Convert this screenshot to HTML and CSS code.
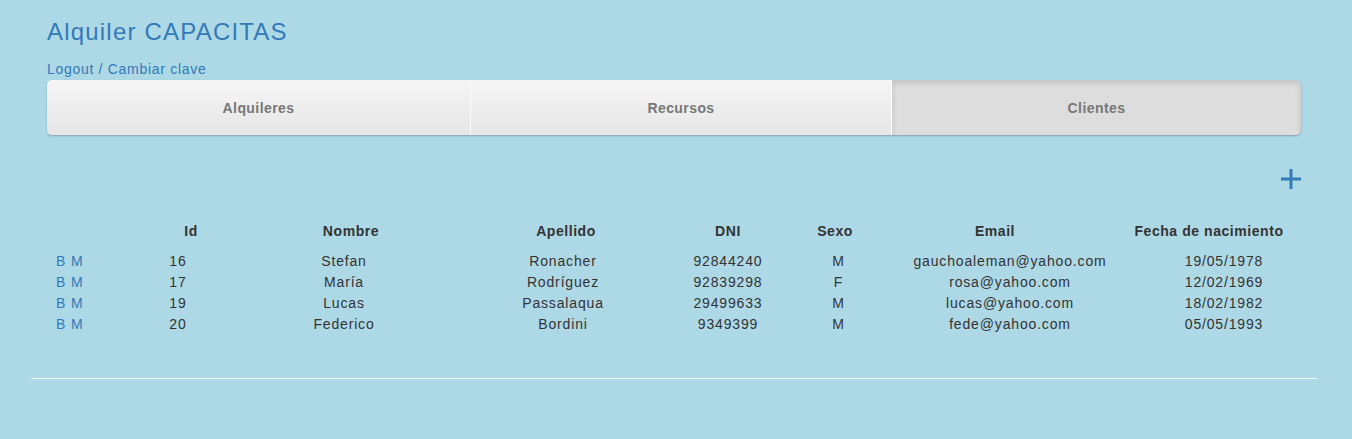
FILE: index.html
```html
<!DOCTYPE html>
<html lang="es">
<head>
<meta charset="utf-8">
<title>Alquiler CAPACITAS</title>
<link rel="stylesheet" href="styles.css">
</head>
<body>
<div class="page">
  <div class="content">
    <h1 class="title">Alquiler CAPACITAS</h1>
    <div class="userlinks"><a href="#">Logout</a> / <a href="#">Cambiar clave</a></div>
    <nav class="tabs">
      <a class="tab t1" href="#">Alquileres</a>
      <a class="tab t2" href="#">Recursos</a>
      <a class="tab t3 active" href="#">Clientes</a>
    </nav>
    <div class="toolbar">
      <a class="add" href="#" aria-label="Agregar">
        <svg width="20" height="20" viewBox="0 0 20 20"><rect x="8.5" y="0" width="3" height="20" fill="#337ab7"/><rect x="0" y="8.5" width="20" height="3" fill="#337ab7"/></svg>
      </a>
    </div>
    <div class="grid">
      <div class="row head">
        <div></div><div>Id</div><div>Nombre</div><div>Apellido</div><div>DNI</div><div>Sexo</div><div>Email</div><div>Fecha de nacimiento</div>
      </div>
      <div class="row body">
        <div class="acts"><a href="#">B</a> <a href="#">M</a></div><div>16</div><div>Stefan</div><div>Ronacher</div><div>92844240</div><div>M</div><div>gauchoaleman@yahoo.com</div><div>19/05/1978</div>
      </div>
      <div class="row body">
        <div class="acts"><a href="#">B</a> <a href="#">M</a></div><div>17</div><div>María</div><div>Rodríguez</div><div>92839298</div><div>F</div><div>rosa@yahoo.com</div><div>12/02/1969</div>
      </div>
      <div class="row body">
        <div class="acts"><a href="#">B</a> <a href="#">M</a></div><div>19</div><div>Lucas</div><div>Passalaqua</div><div>29499633</div><div>M</div><div>lucas@yahoo.com</div><div>18/02/1982</div>
      </div>
      <div class="row body">
        <div class="acts"><a href="#">B</a> <a href="#">M</a></div><div>20</div><div>Federico</div><div>Bordini</div><div>9349399</div><div>M</div><div>fede@yahoo.com</div><div>05/05/1993</div>
      </div>
    </div>
  </div>
  <hr class="rule">
</div>
</body>
</html>
```
FILE: styles.css
```css
html, body {
  margin: 0;
  padding: 0;
  background: #add8e6;
}
body {
  font-family: "Liberation Sans", Arial, sans-serif;
  font-size: 14px;
  line-height: 20px;
  color: #333;
  letter-spacing: 0.06em;
}
a {
  color: #337ab7;
  text-decoration: none;
}
.page {
  margin-left: 31px;
  width: 1286px;
  padding-top: 19px;
}
.content {
  padding: 0 16px;
}
.title {
  margin: 0;
  font-size: 24px;
  line-height: 26.4px;
  font-weight: normal;
  color: #337ab7;
  letter-spacing: 0.05em;
}
.userlinks {
  margin-top: 14px;
  height: 21px;
  color: #337ab7;
  letter-spacing: 0.05em;
}
.tabs {
  display: flex;
  height: 55px;
  border-radius: 5px;
  box-shadow: 0 1px 2px rgba(0,0,0,0.25);
  overflow: hidden;
}
.tab {
  box-sizing: border-box;
  display: flex;
  align-items: center;
  justify-content: center;
  font-weight: bold;
  color: #777;
  letter-spacing: 0.03em;
  background: linear-gradient(to bottom, #f5f5f5 0%, #e6e6e6 100%);
  border-left: 1px solid #fbfbfb;
}
.tab.t1 {
  flex: 0 0 423px;
  border-left: 0;
}
.tab.t2 {
  flex: 0 0 421px;
}
.tab.t3 {
  flex: 1 1 auto;
}
.tab.active {
  background: #dddddd;
  box-shadow: inset 0 3px 6px rgba(0,0,0,0.12);
  border-left: 1px solid #ffffff;
}
.toolbar {
  display: flex;
  justify-content: flex-end;
  margin-top: 34px;
}
.add {
  display: block;
  width: 20px;
  height: 20px;
}
.add svg {
  display: block;
}
.grid {
  margin-top: 32px;
}
.row {
  display: grid;
  line-height: 21px;
}
.row > div {
  text-align: center;
  white-space: nowrap;
}
.row.head {
  grid-template-columns: 107px 74px 246px 184px 140px 74px 246px 182px;
  font-weight: bold;
  letter-spacing: 0.04em;
  padding-bottom: 9px;
}
.row.body {
  grid-template-columns: 96px 70px 262px 176px 154px 67px 276px 152px;
}
.row.body > .acts {
  text-align: left;
  padding-left: 9px;
}
.rule {
  margin: 43px 0 0 0;
  border: 0;
  border-top: 1px solid #eef6f8;
  height: 0;
}
```
